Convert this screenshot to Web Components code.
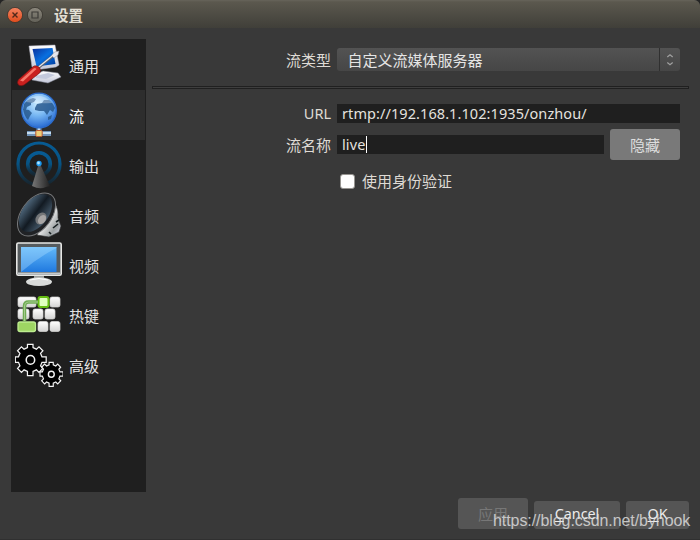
<!DOCTYPE html>
<html lang="zh-CN"><head><meta charset="utf-8"><title>设置</title>
<style>
html,body{margin:0;width:700px;height:540px;overflow:hidden;background:#242424}
body{font:15px/20px "Noto Sans","Noto Sans CJK SC",sans-serif;color:#dfdbd5}
</style></head><body>
<settings-window></settings-window>
<script>
const define=(name,html,setup)=>customElements.define(name,class extends HTMLElement{
  connectedCallback(){
    if(this.shadowRoot)return;
    const t=document.createElement('template');t.innerHTML=html;
    this.attachShadow({mode:'open'}).append(t.content.cloneNode(true));
    if(setup)setup(this,this.shadowRoot);
  }
});

define('title-bar',`<style>
:host{display:flex;align-items:center;gap:3px;height:28px;box-sizing:border-box;padding:2px 7px 0;border-radius:6px 6px 0 0;background:linear-gradient(#67645b 0,#5b584e 2px,#403f39 100%);font-weight:700;font-size:14.5px;color:#e2ded3}
svg{display:block;width:16px;height:16px}
span{margin-left:8px;line-height:20px}
</style>
<svg viewBox="0 0 16 16"><defs><linearGradient id="c" x2="0" y2="1"><stop stop-color="#f48462"/><stop offset="1" stop-color="#df4b1b"/></linearGradient></defs><circle cx="8" cy="8" r="7.6" fill="url(#c)" stroke="#37352f" stroke-width=".8"/><path d="M5.5 5.5l5 5m0-5l-5 5" stroke="#50281a" stroke-width="1.4"/></svg>
<svg viewBox="0 0 16 16" style="margin-left:1px"><defs><linearGradient id="m" x2="0" y2="1"><stop stop-color="#8c887d"/><stop offset="1" stop-color="#626057"/></linearGradient></defs><circle cx="8" cy="8" r="7.6" fill="url(#m)" stroke="#37352f" stroke-width=".8"/><path d="M5 5h6v6H5z" fill="none" stroke="#3c3b37" stroke-width="1.2"/></svg>
<span><slot></slot></span>`);

const icons={
general:`<defs><linearGradient id="a" x2="1" y2="1"><stop stop-color="#0a2f9c"/><stop offset=".5" stop-color="#0870e0"/><stop offset="1" stop-color="#003b9d"/></linearGradient><linearGradient id="b" x2="0" y2="1"><stop stop-color="#fff"/><stop offset="1" stop-color="#c3c7d8"/></linearGradient></defs>
<path d="M17 35l11-5 15 2 3 4-13 6-16-3z" fill="url(#b)" stroke="#7f8290" stroke-width=".5"/><path d="M21 35l12-3 7 2-9 4-10-1z" fill="#c3c9dc"/><path d="M14 5l26-1 4 20-3 2-21 3-3-3z" fill="url(#b)" stroke="#b2b3c3" stroke-width=".5"/><path d="M17.5 8l20-1 3 16-19 2.5z" fill="url(#a)"/>
<path d="M23 27L39 14" stroke="#5d626c" stroke-width="2.8"/><path d="M23 26.6L39 13.6" stroke="#e2e5ec" stroke-width="1.3"/><path d="M36.500 14.500l3-3.500 4.500-1-1 4-4 3z" fill="#e6e7ee" stroke="#8a8b93" stroke-width=".5"/><path d="M3.500 38.500L17 26.500q2-2.500 5-1.500 3.500 1 3.500 4.500 0 2-2 3.500L9 44q-3 1.500-5.500 0-2-2.500 0-5.500z" fill="#c9201e" stroke="#6b1010" stroke-width=".6"/><path d="M5 39.500L18.500 27.500q1.500-1 3 .5L8 40.500z" fill="#ff8778" opacity=".85"/>`,
stream:`<defs><radialGradient id="a" cx=".45" cy=".3" r=".7"><stop stop-color="#ccecff"/><stop offset=".5" stop-color="#76b6f2"/><stop offset="1" stop-color="#286bd2"/></radialGradient></defs><path d="M24 36v7M12 42.500h24" stroke="#7193b8" stroke-width="5"/><path d="M12 42h24M24 36v7" stroke="#c5dcef" stroke-width="2"/><circle cx="24" cy="19.500" r="17.300" fill="url(#a)" stroke="#2b6bcc" stroke-width="1.300"/><path d="M9 13q4-5 9-6l3 1-2 3-3 1 0 2-4 2-1 3-3 0zM8 18l6 1 3 3-2 3-2 4q-4-4-5-11zM20 17l2-4 5-1 2-3 5 0q4 3 6 8l-2 4-3-2-3 5-3-4-5 0-4-1zM33 26l4-2-1 4-3 1z" fill="#28598e" opacity=".85"/><path d="M11 11q13-13 26 1-14 1-26-1z" fill="#fff" opacity=".3"/><rect x="20.800" y="39.500" width="6.400" height="6" rx="1" fill="#edcd78" stroke="#b75631"/>`,
output:`<defs><linearGradient id="a" x2="0" y2="1"><stop stop-color="#075b93"/><stop offset=".5" stop-color="#075383"/><stop offset="1" stop-color="#073553" stop-opacity=".3"/></linearGradient><linearGradient id="b"><stop stop-color="#777"/><stop offset=".4" stop-color="#555"/><stop offset="1" stop-color="#222"/></linearGradient></defs><circle cx="24" cy="23" r="21" fill="none" stroke="url(#a)" stroke-width="3.200"/><circle cx="24" cy="23" r="11.300" fill="none" stroke="url(#a)" stroke-width="3.600"/><path d="M23 25h3l9 20-4 1q-6 3-14-1z" fill="url(#b)"/><circle cx="24" cy="22.500" r="2.700" fill="#1c9af0"/><circle cx="23.500" cy="22" r="1.400" fill="#aee4ff"/>`,
audio:`<defs><linearGradient id="a"><stop stop-color="#4d6579"/><stop offset=".5" stop-color="#121a22"/><stop offset="1" stop-color="#465a6b"/></linearGradient><linearGradient id="b" x2="1" y2="1"><stop stop-color="#222"/><stop offset=".45" stop-color="#eee"/><stop offset=".75" stop-color="#9aa0a1"/><stop offset="1" stop-color="#dde"/></linearGradient></defs><path d="M40 12q4 8 3 15l3 8-2 6-10 5-12-2z" fill="url(#b)" stroke="#303233" stroke-width=".6"/><path d="M41 31l3-2M38 37l5-4M34 41l2 2" stroke="#161e20" stroke-width="1.600"/><ellipse cx="21.500" cy="23.500" rx="15" ry="24.500" transform="rotate(37 21.500 23.500)" fill="#202225" stroke="#77797b" stroke-width="1"/><ellipse cx="20.500" cy="22" rx="13" ry="21.500" transform="rotate(37 20.500 22)" fill="url(#a)"/><ellipse cx="26" cy="27.500" rx="5" ry="6.500" transform="rotate(37 26 27.500)" fill="#747678"/><ellipse cx="27" cy="28.500" rx="3.500" ry="5" transform="rotate(37 27 28.500)" fill="#a8a6a5"/>`,
video:`<defs><linearGradient id="b" x2="0" y2="1"><stop stop-color="#62b9fa"/><stop offset="1" stop-color="#2079df"/></linearGradient></defs><path d="M19 33h10v6H19z" fill="#9b9d9c"/><ellipse cx="24" cy="40.800" rx="13" ry="4.300" fill="#d9dbda"/><path d="M15 39q9-3 18 0" fill="none" stroke="#fff"/><rect x="1.800" y="2" width="44.400" height="32.300" rx="1.500" fill="#555b5e" stroke="#e6e7e5" stroke-width="1.600"/><path d="M3 32.500h42" stroke="#c5cacc" stroke-width="2"/><rect x="6" y="6" width="35.500" height="25" fill="url(#b)"/><path d="M6 31V6h35.500v1Q22 17 6 31z" fill="#acdeff" opacity=".38"/>`,
hotkeys:`<defs><linearGradient id="a" x2="0" y2="1"><stop stop-color="#fff"/><stop offset="1" stop-color="#d4d4d3"/></linearGradient></defs><g transform="translate(0 -1)"><g fill="url(#a)" stroke="#d8d8d7" stroke-width=".7"><rect x="3" y="7" width="18" height="10" rx="2"/><rect x="35" y="7" width="10" height="10" rx="2"/><rect x="3" y="19" width="11" height="10" rx="2"/><rect x="18" y="19" width="10" height="10" rx="2"/><rect x="30" y="19" width="10" height="10" rx="2"/><rect x="23" y="31.500" width="10" height="10" rx="2"/><rect x="35" y="31.500" width="10" height="10" rx="2"/></g><rect x="23.500" y="7" width="10" height="10" rx="2" fill="#e0ffc0" stroke="#65bd12" stroke-width="2"/><rect x="3" y="32" width="17.500" height="9.500" rx="2" fill="#9ed563" stroke="#bdec90" stroke-width="1.300"/><path d="M9.500 31V16q0-4 4-4H23" fill="none" stroke="#6fac53" stroke-width="3.500"/><path d="M9.500 31V16q0-4 4-4H23" fill="none" stroke="#a4ca8e" stroke-width="1"/></g>`,
advanced:`<g fill="#000" stroke="#f5f5f5" stroke-width="1.200"><g transform="translate(.3 2.600) scale(1.030 1.050)"><path d="M11.8 3.9V.8h5.4v3.1l3.3 1.4L23 3l3.8 3.8-2.3 2.5 1.4 3.3H30v5.2h-4.1l-1.4 3.3 2.4 2.4L23 27.400 20.500 25l-3.300 1.400v4.100h-5.400v-4.100L8.500 25 6 27.400l-3.800-3.800 2.300-2.500-1.400-3.300H0v-5.200h3.100l1.400-3.300-2.300-2.500L6 3l2.500 2.300z"/><circle cx="14.700" cy="15.500" r="4.100" stroke-width="1.500"/></g><g transform="translate(25 20.700) scale(.77 .81)"><path d="M11.8 3.9V.8h5.4v3.1l3.3 1.4L23 3l3.8 3.8-2.3 2.5 1.4 3.3H30v5.2h-4.1l-1.4 3.3 2.4 2.4L23 27.400 20.500 25l-3.300 1.400v4.100h-5.400v-4.100L8.500 25 6 27.400l-3.800-3.800 2.300-2.500-1.400-3.300H0v-5.200h3.100l1.400-3.300-2.300-2.500L6 3l2.500 2.300z" stroke-width="1.500"/><circle cx="14.700" cy="15.500" r="3.800" stroke-width="1.800"/></g></g>`
};
define('settings-item',`<style>
:host{display:flex;align-items:center;height:50px;padding-left:3px;gap:6px;color:#e4e4e4}
:host([selected]){background:#2d2d2d;color:#fff}
svg{width:48px;height:48px;flex:none;overflow:hidden}
span{padding-top:1.2px}
</style><svg viewBox="0 0 48 48"></svg><span><slot></slot></span>`,(e,r)=>{r.querySelector('svg').innerHTML=icons[e.getAttribute('icon')]});

define('settings-sidebar',`<style>:host{display:flex;flex-direction:column;width:135px;height:453px;box-sizing:border-box;padding:1px;background:#1f1f1f}</style><slot></slot>`);

define('combo-box',`<style>
:host{display:flex;height:23px;border-radius:3px;background:linear-gradient(#535353,#464646);color:#e5e5e5}
span{flex:1;padding-left:10.5px;line-height:24px}
i{display:flex;width:20px;border-left:1px solid #303030;align-items:center;justify-content:center}
</style><span><slot></slot></span><i><svg width="8" height="14" viewBox="0 0 8 14" fill="none" stroke="#a0a0a0" stroke-width="1.2"><path d="M1.3 4L4 1.7 6.7 4M1.3 9.5L4 11.8l2.7-2.3"/></svg></i>`);

define('text-field',`<style>
:host{display:flex;align-items:center;height:19px;padding-left:5px;background:#1f1f1f;color:#e4e2df;white-space:nowrap;font-size:14.5px;letter-spacing:var(--track,0)}
span{line-height:19px;padding-bottom:1px}
:host([active])::after{content:"";width:1px;height:17px;background:#fff;margin-left:.6px}
</style><span><slot></slot></span>`);

define('push-button',`<style>
:host{display:flex;align-items:center;justify-content:center;box-sizing:border-box;height:28px;width:86px;padding-bottom:2px;border-radius:3px;background:#555;color:#ececec;font-size:14.3px}
:host([tall]){height:31px;width:70px;font-size:15px;padding:0}
:host([raised]){background:#797979;color:#ddd}
:host([disabled]){color:#777}
:host([narrow]){width:63px}
</style><span><slot></slot></span>`);

define('check-option',`<style>
:host{display:flex;align-items:center;gap:7px;padding-left:3px;height:20px}
i{width:15px;height:15px;box-sizing:border-box;border:1px solid #969490;border-radius:3px;background:#fff}
</style><i></i><span><slot></slot></span>`);

define('stream-form',`<style>
:host{display:block;width:537px;padding-top:9px}
.row{display:grid;grid-template-columns:179px 343px;column-gap:6px;align-items:center}
label{text-align:right}
.url{height:19px;grid-template-rows:19px}
.url label{font-size:14.5px;line-height:18px;padding-bottom:1px}
hr{height:1px;margin:15px 0;border:1px solid #202020;background:#3e3e3e}
.key{display:grid;grid-template-columns:267px 70px;gap:6px;align-items:center}
</style>
<div class="row" style="height:23px"><label>流类型</label><combo-box>自定义流媒体服务器</combo-box></div><hr>
<div class="row url"><label>URL</label><text-field style="--track:.08px">rtmp://192.168.1.102:1935/onzhou/</text-field></div>
<div class="row" style="height:31px;margin-top:6px"><label>流名称</label><div class="key"><text-field active style="--track:.1px">live</text-field><push-button tall raised>隐藏</push-button></div></div>
<div class="row" style="margin-top:11px"><span></span><check-option>使用身份验证</check-option></div>`);

define('dialog-footer',`<style>
:host{display:flex;align-items:flex-end;justify-content:flex-end;gap:6px;height:37px;padding:0 11px 0 0}
u{text-underline-offset:2px}
</style><push-button tall disabled>应用</push-button><push-button><u>C</u>ancel</push-button><push-button narrow><u>O</u>K</push-button>`);

define('water-mark',`<style>:host{position:absolute;left:493px;top:511px;font:16px/20px "Liberation Sans",sans-serif;color:rgba(226,226,226,.82);white-space:nowrap;letter-spacing:-.07px}</style><slot></slot>`);

define('settings-window',`<style>
:host{display:block;position:relative;width:700px;height:540px;box-sizing:border-box;border-bottom:1px solid #303030;border-radius:6px 6px 0 0;background:#393939}
main{display:flex;gap:6px;padding:11px 11px 0}
</style>
<title-bar>设置</title-bar>
<main><settings-sidebar>
<settings-item icon="general">通用</settings-item><settings-item icon="stream" selected>流</settings-item><settings-item icon="output">输出</settings-item><settings-item icon="audio">音频</settings-item><settings-item icon="video">视频</settings-item><settings-item icon="hotkeys">热键</settings-item><settings-item icon="advanced">高级</settings-item>
</settings-sidebar><stream-form></stream-form></main>
<dialog-footer></dialog-footer><water-mark>https://blog.csdn.net/byhook</water-mark>`);
</script></body></html>
